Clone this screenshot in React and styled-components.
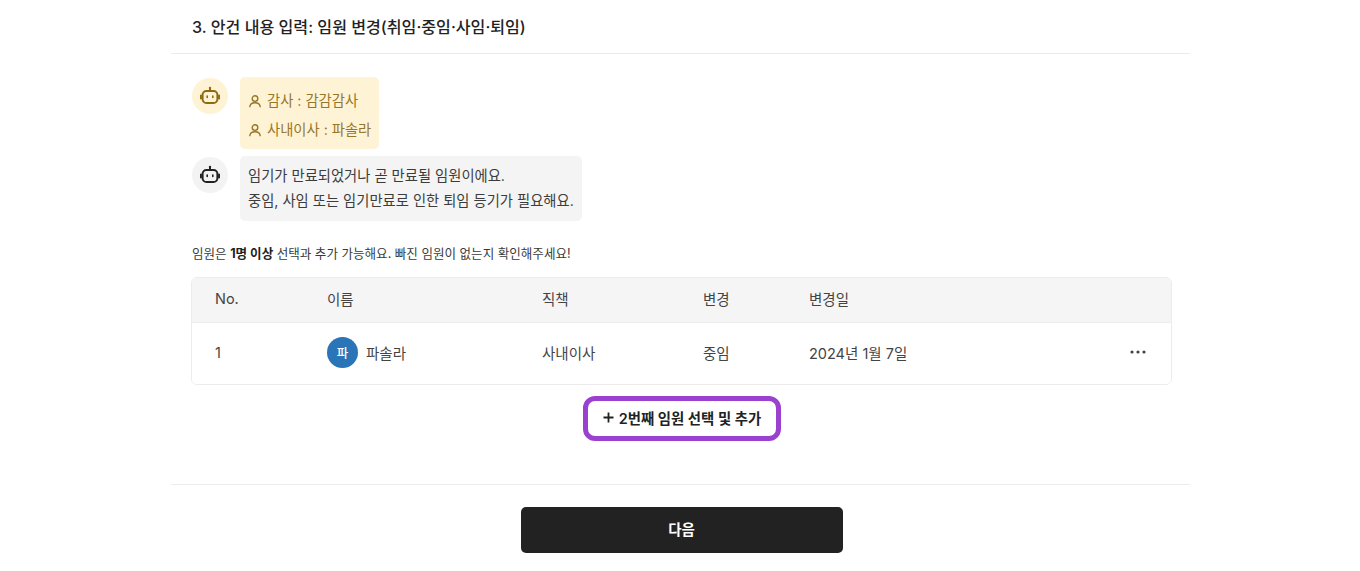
import React from "react";
import styled, { createGlobalStyle } from "styled-components";

const GlobalStyle = createGlobalStyle`
  html, body {
    margin: 0;
    padding: 0;
    background: #fff;
    font-family: "Inter", "Noto Sans CJK KR", sans-serif;
    color: #2b2b2b;
  }
`;

const Page = styled.div`
  width: 1019px;
  height: 571px;
  margin-left: 171px;
  overflow: hidden;
`;

const Header = styled.h2`
  margin: 0;
  padding: 0 0 2px 21px;
  display: flex;
  align-items: center;
  box-sizing: border-box;
  height: 54px;
  font-size: 16.1px;
  font-weight: 500;
  color: #222;
  border-bottom: 1.5px solid #ececec;
`;

const Body = styled.div`
  padding: 23px 18px 0 21px;
`;

const ChatRow = styled.div`
  display: flex;
  align-items: flex-start;
  gap: 12px;
  margin-bottom: 7px;
`;

const Avatar = styled.div`
  width: 36px;
  height: 36px;
  margin-top: 1px;
  border-radius: 50%;
  flex: none;
  display: flex;
  align-items: center;
  justify-content: center;
  background: ${(p) => (p.$tone === "yellow" ? "#fff3d6" : "#f3f3f3")};
  color: ${(p) => (p.$tone === "yellow" ? "#8f6a10" : "#222")};
`;

const Bubble = styled.div`
  border-radius: 5px;
  padding: ${(p) => (p.$tone === "yellow" ? "10px 8px 5px 8px" : "8px")};
  background: ${(p) => (p.$tone === "yellow" ? "#fff3d6" : "#f4f4f4")};
  color: ${(p) => (p.$tone === "yellow" ? "#96772a" : "#3c3c3c")};
  font-size: 14.3px;
  line-height: 24.5px;
`;

const PersonLine = styled.div`
  display: flex;
  align-items: center;
  gap: 5px;
  height: 28.5px;
`;

const Note = styled.p`
  margin: 24px 0 0;
  height: 18px;
  font-size: 12.55px;
  line-height: 18px;
  color: #3a3a3a;
  & b {
    font-weight: 700;
    color: #222;
  }
`;

const Table = styled.div`
  margin: 14px 0 0 -1px;
  border: 1.5px solid #ececec;
  border-radius: 6px;
  overflow: hidden;
  font-size: 14.5px;
  color: #444;
`;

const Row = styled.div`
  display: grid;
  grid-template-columns: 112px 215px 161px 106px 1fr 41px;
  align-items: center;
  padding-left: 23px;
  padding-bottom: ${(p) => (p.$head ? "3px" : "3px")};
  box-sizing: border-box;
  height: ${(p) => (p.$head ? "45px" : "61px")};
  background: ${(p) => (p.$head ? "#f5f5f5" : "#fff")};
  border-bottom: ${(p) => (p.$head ? "1.5px solid #ececec" : "none")};
`;

const NameCell = styled.div`
  display: flex;
  align-items: center;
  gap: 8px;
`;

const Initial = styled.span`
  width: 31px;
  height: 31px;
  border-radius: 50%;
  background: #2a75b8;
  color: #fff;
  font-size: 12.5px;
  font-weight: 500;
  display: flex;
  align-items: center;
  justify-content: center;
`;

const AddWrap = styled.div`
  display: flex;
  justify-content: center;
  margin-top: 11px;
`;

const AddButton = styled.button`
  width: 198px;
  height: 45px;
  box-sizing: border-box;
  border: 5px solid #9b41cf;
  border-radius: 12px;
  background: #fff;
  color: #222;
  font-family: inherit;
  font-size: 14.4px;
  font-weight: 600;
  padding: 0 0 2px;
  display: flex;
  align-items: center;
  justify-content: center;
  gap: 5px;
`;

const Footer = styled.div`
  margin-top: 42.5px;
  border-top: 1.5px solid #ececec;
  padding-top: 22px;
  display: flex;
  justify-content: center;
`;

const NextButton = styled.button`
  width: 322px;
  height: 46px;
  margin-left: 2px;
  border: none;
  border-radius: 5px;
  background: #222;
  color: #fff;
  font-family: inherit;
  font-size: 14.5px;
  font-weight: 600;
  padding: 0 0 2px;
`;

const BotIcon = () => (
  <svg width="20" height="20" viewBox="0 0 20 20" fill="none" stroke="currentColor" strokeWidth="2">
    <rect x="2.6" y="5" width="14.8" height="12" rx="3.8" />
    <path d="M10 5V3" />
    <circle cx="10" cy="1.9" r="1.2" fill="currentColor" stroke="none" />
    <path d="M7.2 10v1.4M12.8 10v1.4" strokeWidth="1.6" strokeLinecap="round" />
    <path d="M.9 9.5v3M19.1 9.5v3" strokeLinecap="round" />
  </svg>
);

const PersonIcon = () => (
  <svg width="14" height="14" viewBox="0 0 14 14" fill="none" stroke="currentColor" strokeWidth="1.4">
    <circle cx="7" cy="4.6" r="2.8" />
    <path d="M1.8 12.6c.5-2.6 2.6-3.8 5.2-3.8s4.7 1.2 5.2 3.8" strokeLinecap="round" />
  </svg>
);

const PlusIcon = () => (
  <svg width="11" height="11" viewBox="0 0 11 11" stroke="currentColor" strokeWidth="1.8">
    <path d="M5.5 .5v10M.5 5.5h10" />
  </svg>
);

const DotsIcon = () => (
  <svg width="16" height="4" viewBox="0 0 16 4" fill="#444">
    <circle cx="2" cy="2" r="1.6" />
    <circle cx="8" cy="2" r="1.6" />
    <circle cx="14" cy="2" r="1.6" />
  </svg>
);

export default function App() {
  return (
    <Page>
      <GlobalStyle />
      <Header>3. 안건 내용 입력: 임원 변경(취임·중임·사임·퇴임)</Header>
      <Body>
        <ChatRow>
          <Avatar $tone="yellow">
            <BotIcon />
          </Avatar>
          <Bubble $tone="yellow">
            <PersonLine>
              <PersonIcon />
              감사 : 감감감사
            </PersonLine>
            <PersonLine>
              <PersonIcon />
              사내이사 : 파솔라
            </PersonLine>
          </Bubble>
        </ChatRow>
        <ChatRow>
          <Avatar>
            <BotIcon />
          </Avatar>
          <Bubble>
            임기가 만료되었거나 곧 만료될 임원이에요.
            <br />
            중임, 사임 또는 임기만료로 인한 퇴임 등기가 필요해요.
          </Bubble>
        </ChatRow>
        <Note>
          임원은 <b>1명 이상</b> 선택과 추가 가능해요. 빠진 임원이 없는지 확인해주세요!
        </Note>
        <Table>
          <Row $head>
            <span>No.</span>
            <span>이름</span>
            <span>직책</span>
            <span>변경</span>
            <span>변경일</span>
            <span />
          </Row>
          <Row>
            <span>1</span>
            <NameCell>
              <Initial>파</Initial>
              파솔라
            </NameCell>
            <span>사내이사</span>
            <span>중임</span>
            <span>2024년 1월 7일</span>
            <DotsIcon />
          </Row>
        </Table>
        <AddWrap>
          <AddButton>
            <PlusIcon />
            2번째 임원 선택 및 추가
          </AddButton>
        </AddWrap>
      </Body>
      <Footer>
        <NextButton>다음</NextButton>
      </Footer>
    </Page>
  );
}
